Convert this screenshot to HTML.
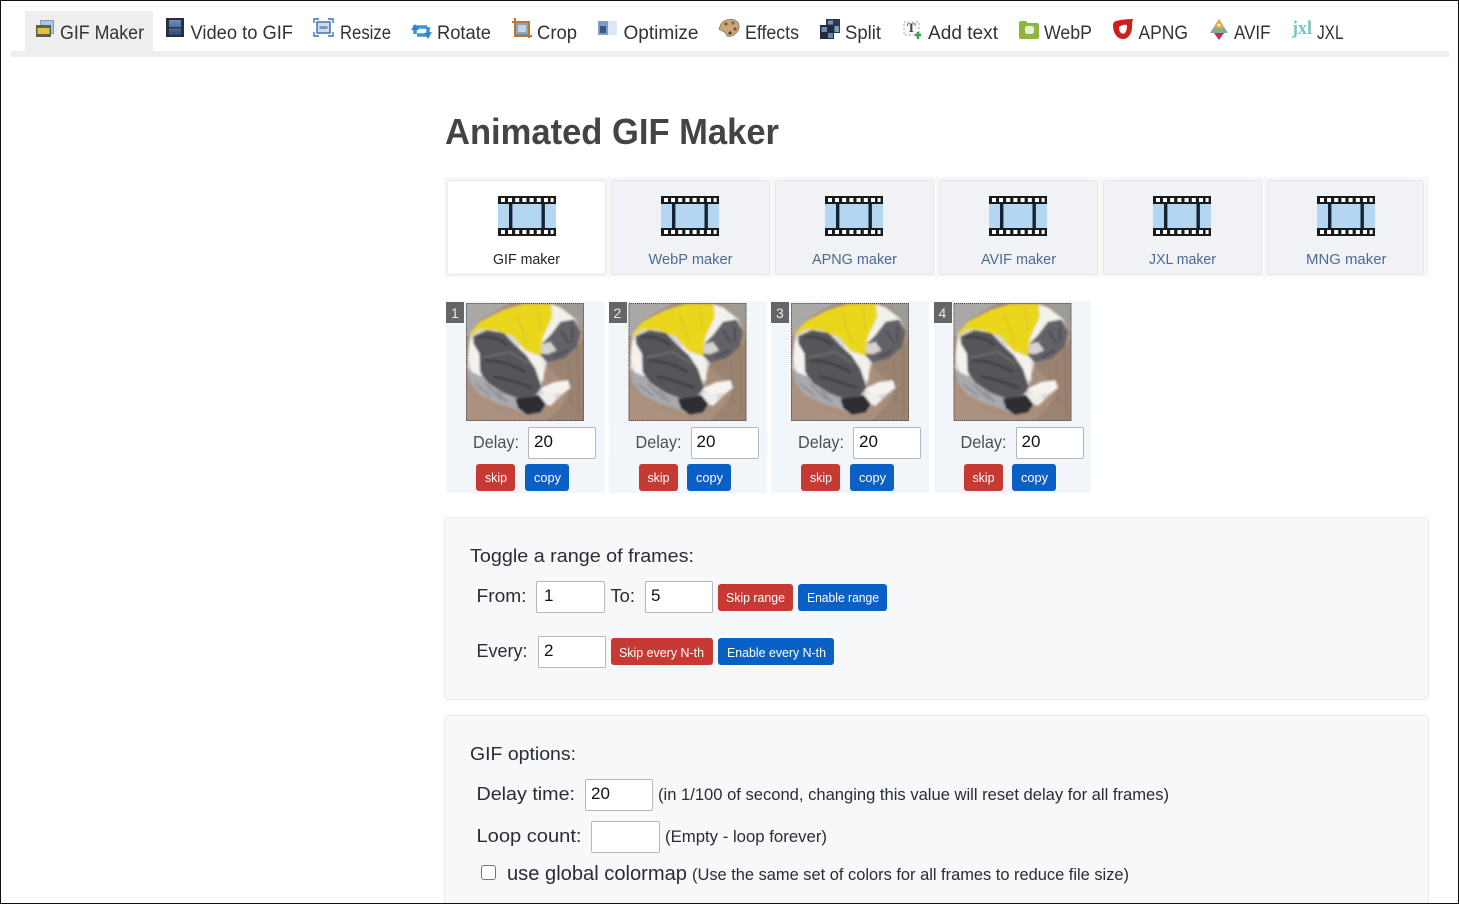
<!DOCTYPE html>
<html lang="en"><head><meta charset="utf-8"><title>Animated GIF Maker</title>
<style>
html,body{margin:0;padding:0;background:#fff;width:1459px;height:904px;overflow:hidden}
body{position:relative;font-family:"Liberation Sans",sans-serif}
svg.page{position:absolute;left:0;top:0}
svg text{font-family:"Liberation Sans",sans-serif}
.n{font-size:19px;fill:#333}
.l{font-size:18.5px;fill:#2a2d31}
.s{font-size:17px;fill:#2a2d31}
.c{font-size:14.5px;fill:#4b6a94}
.d{font-size:17.5px;fill:#495057}
.b{font-size:13px;fill:#fff}
input.t{position:absolute;box-sizing:border-box;height:32px;border:1px solid #b4b8bc;border-radius:2px;background:#fff;padding:0 0 2px 5px;font:17px "Liberation Sans",sans-serif;color:#111;outline:0;margin:0}
.cb{position:absolute;left:481px;top:865px;width:15px;height:15px;box-sizing:border-box;border:1.5px solid #767676;border-radius:3px;background:#fff}
</style></head><body>
<svg class="page" width="1459" height="904" viewBox="0 0 1459 904" xmlns="http://www.w3.org/2000/svg">
<defs>
<filter id="bl" x="-5%" y="-5%" width="110%" height="110%"><feGaussianBlur stdDeviation="3"/></filter>
<clipPath id="cc"><rect x="18" y="9" width="352" height="352"/></clipPath>
<symbol id="cat" viewBox="18 9 352 352">
<g clip-path="url(#cc)">
<rect x="18" y="9" width="352" height="352" fill="#a98f7b"/>
<g filter="url(#bl)">
<path d="M10 0H165L60 60 25 105 10 130Z" fill="#aaa9a7"/>
<path d="M285 0H380V110L345 60Z" fill="#9c9b95"/>
<path d="M250 190L350 140 380 100V370H250L300 320 335 260 300 235Z" fill="#9a8370"/>
<path d="M325 180L330 310M350 130L355 340" stroke="#8b7562" stroke-width="3" fill="none"/>
<path d="M15 250L110 325 175 345 250 370H15Z" fill="#ab917f"/>
<path d="M30 100L60 65 130 30 190 12 275 13 345 60 360 95 350 140 310 175 260 187 247 235 242 262 280 245 322 240 329 262 310 278 289 298 270 316 256 310 240 335 200 342 175 328 110 308 60 282 32 250 22 205 24 170 28 125Z" fill="#d8d8d8"/>
<path d="M22 205L60 215 130 275 178 292 175 330 110 308 60 282 32 250Z" fill="#a9a9ae"/>
<path d="M45 250L90 285M75 250L125 298M110 270L140 305" stroke="#7f7f84" stroke-width="4" fill="none"/>
<path d="M28 122L50 115 70 170 64 228 35 215 24 170Z" fill="#f3f2ef"/>
<path d="M175 135L250 165 250 240 225 240 190 180Z" fill="#f3f1ed"/>
<path d="M40 108L80 90 130 98 165 135 198 165 225 205 244 262 226 284 175 294 130 277 85 248 60 215 58 160 40 130Z" fill="#56545a"/>
<path d="M55 112C90 105 120 115 140 135M75 180C120 180 160 195 195 215M100 228C140 235 180 250 215 262" stroke="#3d3c41" stroke-width="7" fill="none"/>
<path d="M70 172L150 155 205 190" stroke="#7b7b80" stroke-width="3" fill="none"/>
<path d="M30 102L60 65 130 30 190 12H272L278 50 250 110 245 170 195 152 160 110 105 90 60 88 35 108Z" fill="#ead71c"/>
<path d="M170 40L200 130M232 20L240 90" stroke="#dbc91a" stroke-width="5" fill="none"/>
<path d="M272 12L300 22 348 60 300 66 272 108 242 138 248 110 276 50Z" fill="#f2f1ec"/>
<path d="M245 130L270 105 300 65 340 58 360 95 350 140 310 175 260 187 240 165Z" fill="#626267"/>
<path d="M300 90L325 130M335 80L335 125M280 170L320 150" stroke="#45454a" stroke-width="5" fill="none"/>
<path d="M243 132L270 125 288 150 262 162 242 160Z" fill="#d5d2cf"/>
<path d="M238 265L280 245 322 240 329 262 310 278 260 284Z" fill="#f5f3f1"/>
<path d="M238 280L275 280 289 298 270 316 238 305Z" fill="#f0eeec"/>
<path d="M165 295L235 283 256 310 240 335 200 342 175 325Z" fill="#2f2e33"/>
</g>
<rect x="19.5" y="10.5" width="349" height="349" fill="none" stroke="#4a4a4a" stroke-width="3" stroke-dasharray="3 3"/>
</g>
</symbol>
<symbol id="film" viewBox="0 0 58 40">
<rect y="8" width="58" height="24" fill="#b3d7f3"/>
<rect width="58" height="8" fill="#1a1a1a"/><rect y="32" width="58" height="8" fill="#1a1a1a"/>
<rect x="11" y="8" width="3.4" height="24" fill="#152233"/><rect x="43.5" y="8" width="3.4" height="24" fill="#152233"/>
<path d="M3 2h4v4H3zM10 2h4v4h-4zM17.2 2h4v4h-4zM24.4 2h4v4h-4zM31.6 2h4v4h-4zM38.8 2h4v4h-4zM46 2h4v4h-4zM52.6 2h3v4h-3zM3 34h4v4H3zM10 34h4v4h-4zM17.2 34h4v4h-4zM24.4 34h4v4h-4zM31.6 34h4v4h-4zM38.8 34h4v4h-4zM46 34h4v4h-4zM52.6 34h3v4h-3z" fill="#fff"/>
</symbol>
<linearGradient id="vg" x1="0" x2="0" y1="0" y2="1"><stop offset="0" stop-color="#6f8fc0"/><stop offset="1" stop-color="#2f4a78"/></linearGradient>
</defs>

<!-- Tab bar -->
<rect x="11" y="51" width="1438" height="6" fill="#eeeeee"/>
<rect x="25" y="11" width="128" height="46" fill="#eeeeee"/>

<!-- nav icons -->
<g><rect x="40.5" y="20.5" width="13" height="13" fill="#a9c6e6" stroke="#7f99b8"/><rect x="36" y="25" width="15" height="12" fill="#5c5f58"/><rect x="37.5" y="28" width="12" height="6" fill="#e3c33c"/></g>
<g><rect x="166" y="18" width="18" height="19" fill="#28303c"/><rect x="169" y="20" width="12" height="15" fill="url(#vg)"/><rect x="169" y="27" width="12" height="1.4" fill="#28303c"/></g>
<g fill="none"><rect x="317" y="22" width="13" height="11" fill="#cfdcec" stroke="#4c72a8" stroke-width="1.5"/><rect x="319.5" y="26" width="8" height="3" fill="#7a96bd"/><path d="M314 23v-4h5M333 23v-4h-5M314 32v4h5M333 32v4h-5" stroke="#3f6fc0" stroke-width="1.4"/></g>
<g fill="none" stroke="#3a94d8" stroke-width="3.6"><path d="M415 34v-7h12M428 27v8h-11"/></g><path d="M411 30l4-6 4 6zM432 32l-4 7-4-6z" fill="#2f86cc"/>
<g fill="none"><rect x="515" y="22" width="14" height="13" fill="#8aa5c4" stroke="#5b6f8d"/><rect x="518" y="25" width="8" height="7" fill="#c3d4e6"/><path d="M515 18v18h17M512 22h17v16" stroke="#b9772f" stroke-width="2"/></g>
<g><rect x="598" y="21" width="19" height="14" fill="#dbe7f4"/><rect x="598" y="21" width="10" height="14" fill="#7f9cc8"/><rect x="600" y="26" width="6" height="7" fill="#345a7c"/></g>
<g><path d="M721 24C725 18 737 17 739 25 740 32 732 38 727 36 725 30 720 31 719 29Z" fill="#c8a77a" stroke="#8a7558" stroke-width=".8"/><circle cx="726" cy="24" r="1.6" fill="#a34a30"/><circle cx="733" cy="23" r="1.6" fill="#7f6a35"/><circle cx="735" cy="29" r="1.6" fill="#b33a2a"/><circle cx="730" cy="33" r="1.6" fill="#444"/></g>
<g><rect x="826" y="19" width="14" height="14" fill="#2a3a50"/><rect x="820" y="25" width="14" height="14" fill="#1f2d3f"/><rect x="821.5" y="27" width="5.5" height="5" fill="#6f8cb2"/><rect x="828" y="33" width="5" height="5" fill="#6889b1"/><rect x="828" y="20.5" width="5" height="4" fill="#7592b8"/><rect x="834.5" y="26" width="4.5" height="6" fill="#7f9cc0"/></g>
<g><rect x="904" y="22" width="15" height="13" fill="#f7f7f7" stroke="#aaa" stroke-dasharray="2 2"/><text x="907" y="32" style="font-family:'Liberation Serif',serif;font-size:13px;font-weight:bold;fill:#444">T</text><path d="M915 35h6M918 32v7" stroke="#3aa54a" stroke-width="2.4"/></g>
<path d="M1019 23q0-2 2-2h5l2 2h9q2 0 2 2v12q0 2-2 2h-16q-2 0-2-2z" fill="#8fb63a"/><rect x="1025" y="26" width="9" height="8" rx="2.5" fill="#e9f0d8"/>
<path d="M1113 25q0-3 3-4 8-2 17-2-1 3-1 8c0 7-4 12-9 12-6 0-10-6-10-14z" fill="#cf1f1c"/><path d="M1119 27q4-3 8-2 0 8-4 9-4-1-4-7z" fill="#fff"/>
<path d="M1219 19l9 14h-18z" fill="#7fb28f"/><path d="M1219 19l5 9h-10z" fill="#f2a33a"/><path d="M1214 33h10l-5 7z" fill="#c2305e"/><circle cx="1219" cy="25" r="1.4" fill="#fff"/>
<text x="1292" y="34" style="font-family:'Liberation Serif',serif;font-size:19px;font-weight:bold;fill:#7cc4bd" textLength="20" lengthAdjust="spacingAndGlyphs">jxl</text>

<!-- nav text -->
<text class="n" x="60" y="39" textLength="84" lengthAdjust="spacingAndGlyphs">GIF Maker</text>
<text class="n" x="190.5" y="39" textLength="102.5" lengthAdjust="spacingAndGlyphs">Video to GIF</text>
<text class="n" x="340" y="39" textLength="51" lengthAdjust="spacingAndGlyphs">Resize</text>
<text class="n" x="437" y="39" textLength="54" lengthAdjust="spacingAndGlyphs">Rotate</text>
<text class="n" x="537" y="39" textLength="40" lengthAdjust="spacingAndGlyphs">Crop</text>
<text class="n" x="623.5" y="39" textLength="75" lengthAdjust="spacingAndGlyphs">Optimize</text>
<text class="n" x="745" y="39" textLength="54" lengthAdjust="spacingAndGlyphs">Effects</text>
<text class="n" x="845" y="39" textLength="36" lengthAdjust="spacingAndGlyphs">Split</text>
<text class="n" x="928" y="39" textLength="70" lengthAdjust="spacingAndGlyphs">Add text</text>
<text class="n" x="1044" y="39" textLength="48" lengthAdjust="spacingAndGlyphs">WebP</text>
<text class="n" x="1138.5" y="39" textLength="49.5" lengthAdjust="spacingAndGlyphs">APNG</text>
<text class="n" x="1234" y="39" textLength="36.5" lengthAdjust="spacingAndGlyphs">AVIF</text>
<text class="n" x="1317" y="39" textLength="26.5" lengthAdjust="spacingAndGlyphs">JXL</text>

<!-- Title -->
<text x="445" y="144" style="font-size:36px;font-weight:bold;fill:#444" textLength="334" lengthAdjust="spacingAndGlyphs">Animated GIF Maker</text>

<!-- Maker tabs -->
<rect x="444" y="177" width="985" height="100" fill="#f7f7f8"/>
<g stroke="#e6e7ea" stroke-width="1">
<rect x="447.5" y="180.5" width="158" height="94" rx="3" fill="#fff"/>
<rect x="611.5" y="180.5" width="158" height="94" rx="3" fill="#f1f2f6"/>
<rect x="775.5" y="180.5" width="158" height="94" rx="3" fill="#f1f2f6"/>
<rect x="939.5" y="180.5" width="158" height="94" rx="3" fill="#f1f2f6"/>
<rect x="1103.5" y="180.5" width="158" height="94" rx="3" fill="#f1f2f6"/>
<rect x="1267.5" y="180.5" width="156" height="94" rx="3" fill="#f1f2f6"/>
</g>
<use href="#film" x="498" y="196" width="58" height="40"/>
<use href="#film" x="661" y="196" width="58" height="40"/>
<use href="#film" x="825" y="196" width="58" height="40"/>
<use href="#film" x="989" y="196" width="58" height="40"/>
<use href="#film" x="1153" y="196" width="58" height="40"/>
<use href="#film" x="1317" y="196" width="58" height="40"/>
<text class="c" x="493" y="264" style="fill:#212529" textLength="67" lengthAdjust="spacingAndGlyphs">GIF maker</text>
<text class="c" x="648.5" y="264" textLength="84" lengthAdjust="spacingAndGlyphs">WebP maker</text>
<text class="c" x="812" y="264" textLength="85" lengthAdjust="spacingAndGlyphs">APNG maker</text>
<text class="c" x="981" y="264" textLength="75" lengthAdjust="spacingAndGlyphs">AVIF maker</text>
<text class="c" x="1149" y="264" textLength="67" lengthAdjust="spacingAndGlyphs">JXL maker</text>
<text class="c" x="1306" y="264" textLength="80.5" lengthAdjust="spacingAndGlyphs">MNG maker</text>

<!-- Frames -->
<g fill="#f2f5f9">
<rect x="446" y="301" width="159" height="192"/><rect x="609" y="301" width="158" height="192"/><rect x="771" y="301" width="158" height="192"/><rect x="934" y="301" width="157" height="192"/>
</g>
<g fill="#666">
<rect x="446" y="302" width="18" height="21"/><rect x="609" y="302" width="18" height="21"/><rect x="771" y="302" width="18" height="21"/><rect x="934" y="302" width="18" height="21"/>
</g>
<text x="451" y="318" style="font-size:14px;fill:#e8e8e8">1</text><text x="613.5" y="318" style="font-size:14px;fill:#e8e8e8">2</text><text x="776" y="318" style="font-size:14px;fill:#e8e8e8">3</text><text x="938.5" y="318" style="font-size:14px;fill:#e8e8e8">4</text>
<use href="#cat" x="466" y="303" width="118" height="118"/>
<use href="#cat" x="628.5" y="303" width="118" height="118"/>
<use href="#cat" x="791" y="303" width="118" height="118"/>
<use href="#cat" x="953.5" y="303" width="118" height="118"/>
<text class="d" x="473" y="448" textLength="46" lengthAdjust="spacingAndGlyphs">Delay:</text>
<text class="d" x="635.5" y="448" textLength="46" lengthAdjust="spacingAndGlyphs">Delay:</text>
<text class="d" x="798" y="448" textLength="46" lengthAdjust="spacingAndGlyphs">Delay:</text>
<text class="d" x="960.5" y="448" textLength="46" lengthAdjust="spacingAndGlyphs">Delay:</text>

<rect x="476" y="464" width="39" height="27" rx="3" fill="#c73a34"/><rect x="525" y="464" width="44" height="27" rx="3" fill="#0b60c5"/>
<rect x="639" y="464" width="39" height="27" rx="3" fill="#c73a34"/><rect x="687" y="464" width="44" height="27" rx="3" fill="#0b60c5"/>
<rect x="801" y="464" width="39" height="27" rx="3" fill="#c73a34"/><rect x="850" y="464" width="44" height="27" rx="3" fill="#0b60c5"/>
<rect x="964" y="464" width="39" height="27" rx="3" fill="#c73a34"/><rect x="1012" y="464" width="44" height="27" rx="3" fill="#0b60c5"/>
<text class="b" x="485" y="482" textLength="22" lengthAdjust="spacingAndGlyphs">skip</text><text class="b" x="534" y="482" textLength="27" lengthAdjust="spacingAndGlyphs">copy</text>
<text class="b" x="647.5" y="482" textLength="22" lengthAdjust="spacingAndGlyphs">skip</text><text class="b" x="696" y="482" textLength="27" lengthAdjust="spacingAndGlyphs">copy</text>
<text class="b" x="810" y="482" textLength="22" lengthAdjust="spacingAndGlyphs">skip</text><text class="b" x="859" y="482" textLength="27" lengthAdjust="spacingAndGlyphs">copy</text>
<text class="b" x="972.5" y="482" textLength="22" lengthAdjust="spacingAndGlyphs">skip</text><text class="b" x="1021" y="482" textLength="27" lengthAdjust="spacingAndGlyphs">copy</text>

<!-- Toggle panel -->
<rect x="444.5" y="517.5" width="984" height="182" rx="4" fill="#f6f8fa" stroke="#e8ebee"/>
<text class="l" x="470" y="562" textLength="224" lengthAdjust="spacingAndGlyphs">Toggle a range of frames:</text>
<text class="l" x="476.5" y="602" textLength="50" lengthAdjust="spacingAndGlyphs">From:</text>
<text class="l" x="610.5" y="602" textLength="24.5" lengthAdjust="spacingAndGlyphs">To:</text>
<rect x="718" y="584" width="75" height="27" rx="3" fill="#c73a34"/><rect x="798" y="584" width="89" height="27" rx="3" fill="#0b60c5"/>
<text class="b" x="726" y="602" textLength="59" lengthAdjust="spacingAndGlyphs">Skip range</text>
<text class="b" x="807" y="602" textLength="72" lengthAdjust="spacingAndGlyphs">Enable range</text>
<text class="l" x="476.5" y="657" textLength="51" lengthAdjust="spacingAndGlyphs">Every:</text>
<rect x="611" y="638" width="102" height="27" rx="3" fill="#c73a34"/><rect x="718" y="638" width="116" height="27" rx="3" fill="#0b60c5"/>
<text class="b" x="619" y="657" textLength="85" lengthAdjust="spacingAndGlyphs">Skip every N-th</text>
<text class="b" x="727" y="657" textLength="99" lengthAdjust="spacingAndGlyphs">Enable every N-th</text>

<!-- GIF options -->
<rect x="444.5" y="715.5" width="984" height="230" rx="4" fill="#f6f8fa" stroke="#e8ebee"/>
<text class="l" x="470" y="760" textLength="106" lengthAdjust="spacingAndGlyphs">GIF options:</text>
<text class="l" x="476.5" y="800" textLength="98.5" lengthAdjust="spacingAndGlyphs">Delay time:</text>
<text class="s" x="658" y="800" textLength="511" lengthAdjust="spacingAndGlyphs">(in 1/100 of second, changing this value will reset delay for all frames)</text>
<text class="l" x="476.5" y="842" textLength="105" lengthAdjust="spacingAndGlyphs">Loop count:</text>
<text class="s" x="665" y="842" textLength="162" lengthAdjust="spacingAndGlyphs">(Empty - loop forever)</text>
<text class="l" x="507" y="880" style="font-size:20px" textLength="180" lengthAdjust="spacingAndGlyphs">use global colormap</text>
<text class="s" x="692" y="880" textLength="437" lengthAdjust="spacingAndGlyphs">(Use the same set of colors for all frames to reduce file size)</text>

<!-- screenshot border -->
<rect x="0.5" y="0.5" width="1458" height="903" fill="none" stroke="#111" stroke-width="1"/>
</svg>

<input class="t" style="left:528px;top:427px;width:68px" value="20">
<input class="t" style="left:690.5px;top:427px;width:68px" value="20">
<input class="t" style="left:853px;top:427px;width:68px" value="20">
<input class="t" style="left:1015.5px;top:427px;width:68px" value="20">
<input class="t" style="left:536px;top:581px;width:69px;padding-left:7px" value="1">
<input class="t" style="left:645px;top:581px;width:68px" value="5">
<input class="t" style="left:538px;top:636px;width:68px" value="2">
<input class="t" style="left:585px;top:779px;width:68px" value="20">
<input class="t" style="left:591px;top:821px;width:69px" value="">
<div class="cb"></div>
</body></html>
